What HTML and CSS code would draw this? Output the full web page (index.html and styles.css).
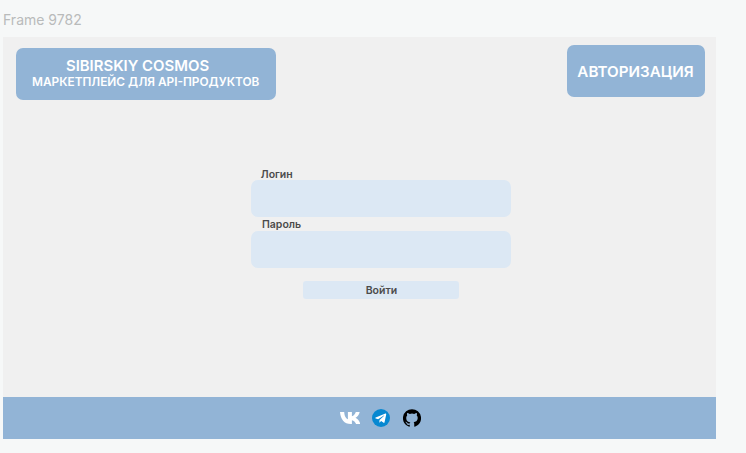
FILE: index.html
```html
<!DOCTYPE html>
<html lang="ru">
<head>
<meta charset="utf-8">
<title>Sibirskiy Cosmos</title>
<link rel="stylesheet" href="styles.css">
</head>
<body>
<div class="frame-name">Frame 9782</div>
<div class="frame">
  <header class="header">
    <div class="brand">
      <div class="brand-title">SIBIRSKIY COSMOS</div>
      <div class="brand-subtitle">МАРКЕТПЛЕЙС ДЛЯ API-ПРОДУКТОВ</div>
    </div>
    <div class="auth">АВТОРИЗАЦИЯ</div>
  </header>
  <form class="login">
    <label class="label" for="login">Логин</label>
    <input class="field" id="login" type="text">
    <label class="label label-password" for="password">Пароль</label>
    <input class="field" id="password" type="password">
    <button class="submit" type="button">Войти</button>
  </form>
  <footer class="footer">
    <svg class="vk" viewBox="2.1 5.5 20 12.5" preserveAspectRatio="none"><path fill="#fff" d="M13 18C6.2 18 2.8 13.3 2.1 5.5h4.2c.2 4.7 2.2 7 3.7 7.6V5.5h4V10c1.7-.4 3.2-2.4 3.900-4.500h3.900c-.5 3-2.600 5.100-4.200 6.100 1.600.7 3.900 2.700 4.800 6.400h-4.200c-.8-2.100-2.200-3.600-4.200-4V18z"/></svg>
    <svg class="telegram" viewBox="0 0 24 24"><circle cx="12" cy="12" r="12" fill="#0788d1"/><path fill="#fff" d="M17.9 6.1 4.9 11.3c-.8.4-.7.9.1 1.2l3.2 1 7.6-4.8c.4-.2.7-.1.4.2L10 14.5l-.2 3.4c.4 0 .6-.2.8-.4l1.6-1.6 3.3 2.5c.6.3 1 .1 1.2-.6l2.2-10.3c.2-1-.3-1.5-1-1.4z"/></svg>
    <svg class="github" viewBox="0 0 24 24"><path d="M12 .3a12 12 0 0 0-3.8 23.4c.6.1.8-.3.8-.6v-2c-3.3.7-4-1.6-4-1.6-.6-1.4-1.4-1.8-1.4-1.8-1-.7.1-.7.1-.7 1.2 0 1.9 1.2 1.9 1.2 1 1.8 2.8 1.3 3.5 1 0-.8.4-1.3.7-1.6-2.7-.3-5.5-1.3-5.5-6 0-1.2.5-2.3 1.3-3.1-.2-.4-.6-1.6 0-3.2 0 0 1-.3 3.4 1.2a11.5 11.5 0 0 1 6 0c2.3-1.5 3.3-1.2 3.3-1.2.6 1.6.2 2.8 0 3.2.9.8 1.3 1.9 1.3 3.2 0 4.6-2.8 5.6-5.5 5.9.5.4.9 1 .9 2.2v3.3c0 .3.1.7.8.6A12 12 0 0 0 12 .3"/></svg>
  </footer>
</div>
</body>
</html>
```
FILE: styles.css
```css
* { box-sizing: border-box; }

body {
  margin: 0;
  height: 453px;
  overflow: hidden;
  padding-left: 3px;
  background: #f6f8f8;
  font-family: Inter, sans-serif;
}

.frame-name {
  height: 37px;
  padding-top: 11px;
  font-size: 14px;
  line-height: 18px;
  color: #b9bbbb;
}

.frame {
  display: flex;
  flex-direction: column;
  width: 713px;
  height: 401.5px;
  background: #f0f0f0;
}

.header {
  display: flex;
  justify-content: space-between;
  align-items: flex-start;
  padding: 8px 11px 0 13px;
}

.brand,
.auth {
  height: 52px;
  border-radius: 7px;
  background: #92b4d6;
  color: #fff;
  font-weight: 600;
  white-space: nowrap;
}

.brand {
  width: 260px;
  margin-top: 3.4px;
  padding: 8.6px 0 0 16px;
}

.brand-title {
  padding-left: 34px;
  font-size: 14.9px;
  line-height: 18px;
}

.brand-subtitle {
  font-size: 11.85px;
  line-height: 14px;
}

.auth {
  width: 138px;
  padding-right: 1px;
  font-size: 15.2px;
  line-height: 53px;
  text-align: center;
}

.login {
  display: flex;
  flex-direction: column;
  width: 260px;
  margin: 66px 0 0 248.4px;
}

.label {
  height: 13.7px;
  padding: 1.6px 0 0 9.4px;
  font-size: 10.5px;
  font-weight: 600;
  line-height: 14px;
  color: #4b4b4b;
}

.label-password {
  padding: 0.6px 0 0 10.6px;
}

.field {
  width: 100%;
  height: 37px;
  padding: 0 10px;
  border: 0;
  border-radius: 7px;
  background: #dce8f4;
}

.submit {
  width: 156px;
  height: 18.5px;
  margin: 12.8px auto 0;
  padding: 1px 0 0;
  border: 0;
  border-radius: 3px;
  background: #dce8f4;
  color: #4b4b4b;
  font: 600 10.5px/18px Inter, sans-serif;
}

.footer {
  display: flex;
  align-items: center;
  height: 41.5px;
  margin-top: auto;
  padding-left: 337px;
  background: #92b4d6;
}

.vk { width: 20px; height: 12px; }
.telegram { width: 18px; height: 18px; margin-left: 12.4px; }
.github { width: 18px; height: 18px; margin-left: 12.6px; }
```
